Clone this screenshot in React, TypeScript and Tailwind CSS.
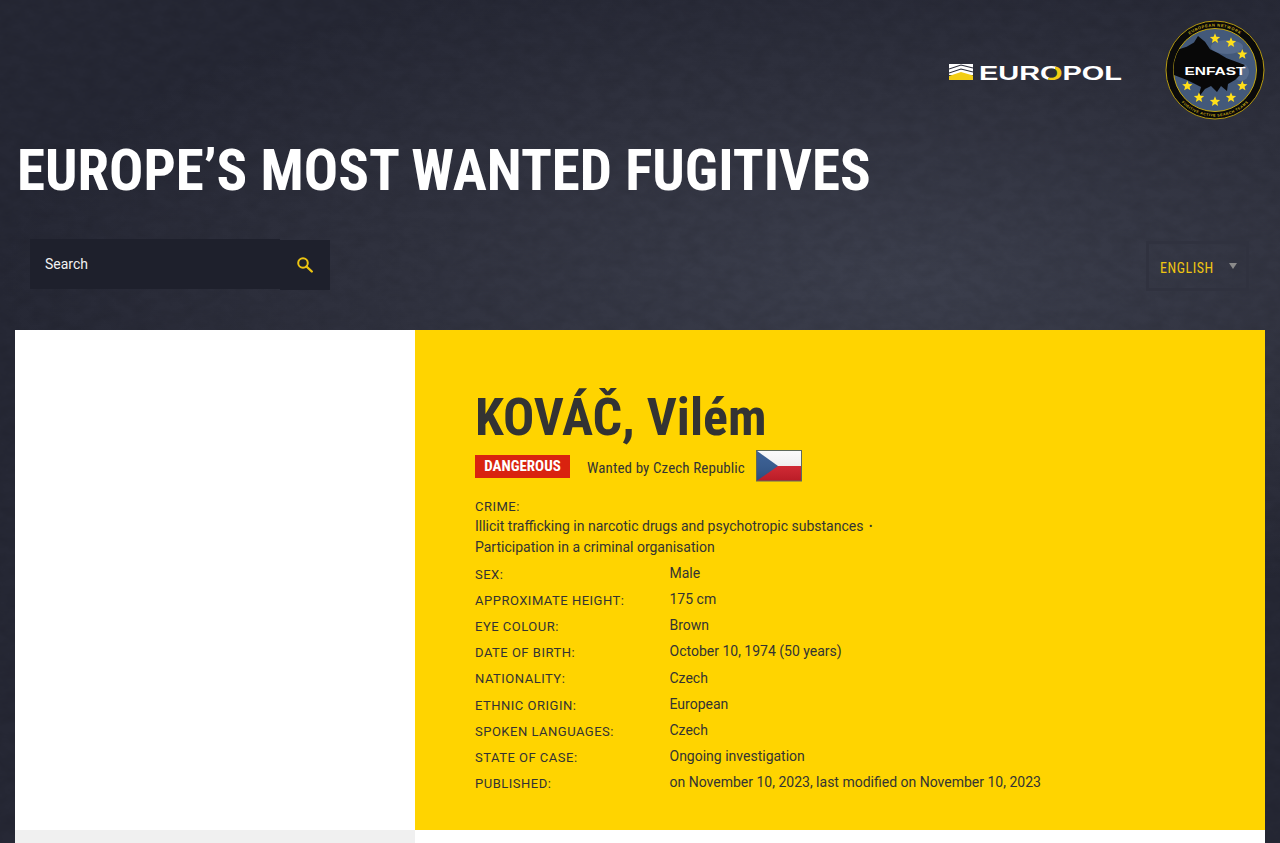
const rows: [string, string][] = [
  ["SEX:", "Male"],
  ["APPROXIMATE HEIGHT:", "175 cm"],
  ["EYE COLOUR:", "Brown"],
  ["DATE OF BIRTH:", "October 10, 1974 (50 years)"],
  ["NATIONALITY:", "Czech"],
  ["ETHNIC ORIGIN:", "European"],
  ["SPOKEN LANGUAGES:", "Czech"],
  ["STATE OF CASE:", "Ongoing investigation"],
  ["PUBLISHED:", "on November 10, 2023, last modified on November 10, 2023"],
];

const cond = "font-['Roboto_Condensed','Roboto',sans-serif] font-stretch-condensed";

function Europol() {
  return (
    <svg width="174" height="30" viewBox="0 -6 174 30" className="block">
      <defs>
        <linearGradient id="o" gradientUnits="userSpaceOnUse" x1="92" y1="3" x2="114" y2="17">
          <stop offset="0.5" stopColor="#fff" />
          <stop offset="0.5" stopColor="#f2cd14" />
        </linearGradient>
      </defs>
      <rect x="0" y="1" width="24" height="11" fill="#fff" />
      <path d="M0 6 L12 2 L24 5" fill="none" stroke="#2b2d3a" strokeWidth="1.1" />
      <path d="M0 10 L12 6 L24 9" fill="none" stroke="#2b2d3a" strokeWidth="1.1" />
      <path d="M0 17 V13 L12 9 L24 12.5 V17Z" fill="#f2cd14" />
      <text x="30" y="17" fontFamily="'Liberation Sans',sans-serif" fontWeight="700" fontSize="21" fill="#fff" textLength="143" lengthAdjust="spacingAndGlyphs">
        EUR<tspan fill="url(#o)">O</tspan>POL
      </text>
    </svg>
  );
}

function star(cx: number, cy: number, r = 5.4) {
  const pts: string[] = [];
  for (let i = 0; i < 10; i++) {
    const a = -Math.PI / 2 + (i * Math.PI) / 5;
    const rr = i % 2 ? r * 0.44 : r;
    pts.push(`${(cx + rr * Math.cos(a)).toFixed(2)},${(cy + rr * Math.sin(a)).toFixed(2)}`);
  }
  return <polygon key={`${cx}-${cy}`} points={pts.join(" ")} fill="#ffdf1a" />;
}

function Enfast() {
  const stars = [[50, 18.7], [66, 22.7], [77.3, 34.3], [77.3, 66], [66, 77.7], [50, 81.7], [34, 77.7], [22.3, 66]];
  return (
    <svg width="100" height="100" viewBox="0 0 100 100" className="block">
      <defs>
        <clipPath id="inner"><circle cx="50" cy="50" r="41.5" /></clipPath>
        <path id="top" d="M6.5 50 A43.5 43.5 0 0 1 93.5 50" />
        <path id="bot" d="M3.5 50 A46.5 46.5 0 0 0 96.5 50" />
      </defs>
      <circle cx="50" cy="50" r="49" fill="#0a0a0a" stroke="#b59a12" strokeWidth="1" />
      <circle cx="50" cy="50" r="41.5" fill="#43597a" stroke="#c4a814" strokeWidth="1" />
      <g clipPath="url(#inner)">
        <ellipse cx="62" cy="27" rx="16" ry="7" fill="#566b8c" />
        <ellipse cx="76" cy="52" rx="8" ry="9" fill="#566b8c" />
        <path d="M0 58 L9 55 L22 60 L36 67 L33 78 L40 69 L46 66 L52 72 L56 66 L62 71 L63 64 L70 60 L75 55 L77.3 47.3 L80 45 L61.7 38.3 L53.3 33.3 L45 29.3 L40 21.7 L33 16 L29 22.5 L21.7 26.7 L11.7 30 L0 36Z" fill="#080808" />
      </g>
      {stars.map(([x, y]) => star(x, y))}
      <text fontFamily="'Liberation Sans',sans-serif" fontSize="4" fontWeight="700" fill="#c4a814" letterSpacing="0.6" textAnchor="middle">
        <textPath href="#top" startOffset="50%">EUROPEAN NETWORK</textPath>
      </text>
      <text fontFamily="'Liberation Sans',sans-serif" fontSize="3.6" fontWeight="700" fill="#c4a814" letterSpacing="0.5" textAnchor="middle">
        <textPath href="#bot" startOffset="50%">FUGITIVE ACTIVE SEARCH TEAMS</textPath>
      </text>
      <text x="50" y="54.5" textAnchor="middle" fontFamily="'Liberation Sans',sans-serif" fontWeight="700" fontSize="11" fill="#fff" textLength="61" lengthAdjust="spacingAndGlyphs">ENFAST</text>
    </svg>
  );
}

function Flag() {
  return (
    <svg width="46" height="32" viewBox="0 0 46 32" className="block shrink-0">
      <defs>
        <linearGradient id="g" x1="0" y1="0" x2="0" y2="1">
          <stop offset="0" stopColor="#fff" stopOpacity="0.05" />
          <stop offset="1" stopColor="#000" stopOpacity="0.14" />
        </linearGradient>
      </defs>
      <rect x="0.5" y="0.5" width="45" height="15.5" fill="#fafafa" />
      <rect x="0.5" y="16" width="45" height="15" fill="#d7202c" />
      <path d="M0.5 0.5 L22 16 L0.5 31Z" fill="#31588f" />
      <rect x="0.5" y="0.5" width="45" height="30.5" fill="url(#g)" />
      <rect x="0.5" y="0.5" width="45" height="30.5" fill="none" stroke="#5e6a5c" strokeWidth="1" />
    </svg>
  );
}

export default function App() {
  return (
    <div className="relative h-[843px] overflow-hidden bg-[radial-gradient(ellipse_900px_330px_at_900px_280px,#3c3f4d_0%,#30323f_55%,#262835_100%)] font-['Roboto',sans-serif]">
      <svg className="absolute inset-0 pointer-events-none opacity-[0.1]" width="1280" height="843">
        <filter id="grain">
          <feTurbulence type="fractalNoise" baseFrequency="0.06 0.09" numOctaves="4" seed="7" />
          <feColorMatrix values="0 0 0 0 0  0 0 0 0 0  0 0 0 0 0  1.4 0 0 0 -0.45" />
        </filter>
        <rect width="1280" height="843" filter="url(#grain)" />
      </svg>

      <div className="relative">
        <header className="flex h-[120px] items-center justify-end pr-[15px] pt-5">
          <div className="mr-[42px] mt-[3px]"><Europol /></div>
          <Enfast />
        </header>

        <h1 className={`pl-[17px] pt-[15px] text-[57px] leading-[72px] font-bold text-white whitespace-nowrap ${cond}`}>
          EUROPE’S MOST WANTED FUGITIVES
        </h1>

        <div className="mt-[32px] flex items-start justify-between pl-[30px] pr-[31px]">
          <div className="flex">
            <div className="flex h-[50px] w-[250px] items-center bg-[#1e202c] pl-[15px] text-sm text-[#f2f2f2]">Search</div>
            <div className="mt-px flex h-[50px] w-[50px] items-center justify-center bg-[#1e202c]">
              <svg width="18" height="18" viewBox="0 0 18 18" fill="none" stroke="#eec511" strokeWidth="2">
                <circle cx="7" cy="7" r="4.8" />
                <path d="M10.5 10.5 L15.8 15.5" strokeLinecap="round" strokeWidth="2.4" />
              </svg>
            </div>
          </div>
          <div className="mt-[2px] flex h-[50px] w-[103px] items-center justify-between border-[3px] border-[#30323f] pl-[11px] pr-[9px]">
            <span className={`mt-[4px] text-sm tracking-[0.55px] text-[#eec511] ${cond}`}>ENGLISH</span>
            <span className="h-0 w-0 border-x-[4px] border-t-[6px] border-x-transparent border-t-[#8b8b8b]" />
          </div>
        </div>

        <main className="mx-[15px] mt-[39px] flex">
          <div className="w-[400px]">
            <div className="h-[500px] bg-white" />
            <div className="h-[20px] bg-[#f0f0f0]" />
          </div>
          <div className="flex-1 bg-white">
            <section className="h-[500px] bg-[#ffd400] pl-[60px] pt-[56px] text-[#333]">
              <h2 className={`text-[52px] leading-[64px] font-bold ${cond}`}>KOVÁČ, Vilém</h2>
              <div className="flex h-[32px] items-center">
                <span className={`flex h-[23px] w-[95px] items-center justify-center bg-[#d9230f] text-[15px] font-bold text-white ${cond}`}>DANGEROUS</span>
                <span className={`ml-[17px] mr-[11px] text-[15px] tracking-[0.1px] ${cond} mt-[5px]`}>Wanted by Czech Republic</span>
                <Flag />
              </div>
              <div className="mt-[17px] text-[13px] leading-[16px] tracking-[0.5px]">CRIME:</div>
              <div className="mt-[1px] w-[400px] text-sm leading-[21px]">
                Illicit trafficking in narcotic drugs and psychotropic substances <span className="ml-[2px] text-[10px] align-[1px]">•</span>
                <br />Participation in a criminal organisation
              </div>
              <div className="mt-[2px] flex flex-col">
                {rows.map(([k, v]) => (
                  <div key={k} className="flex h-[26.15px] items-center">
                    <span className="mt-[3px] w-[194.5px] text-[13px] tracking-[0.5px]">{k}</span>
                    <span className="text-sm">{v}</span>
                  </div>
                ))}
              </div>
            </section>
          </div>
        </main>
      </div>
    </div>
  );
}
